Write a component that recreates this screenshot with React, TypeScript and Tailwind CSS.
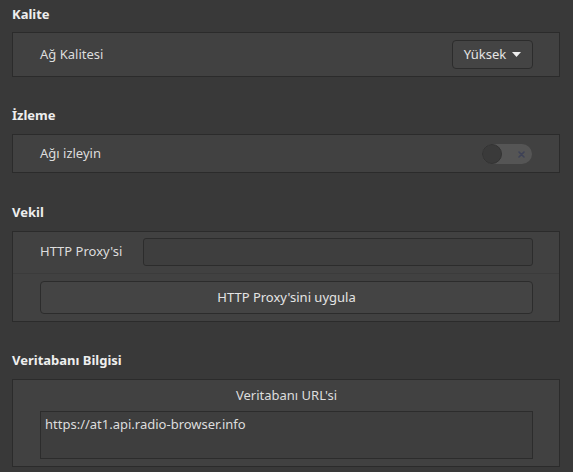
import React from 'react'

const font = { fontFamily: '"Noto Sans", "DejaVu Sans", sans-serif' }

const Heading: React.FC<{ text: string; top: string; bottom: string }> = ({ text, top, bottom }) => (
  <div className={`h-[20px] flex items-center text-[13px] font-bold text-[#eeeeee] ${top} ${bottom}`}>{text}</div>
)

const Toggle: React.FC = () => (
  <div className="relative w-[50px] h-[20px] rounded-full bg-[#555555]">
    <div className="absolute left-0 top-0 w-[20px] h-[20px] rounded-full bg-[#3a3a3a] border border-[#333333]" />
    <svg className="absolute left-[36px] top-[7px]" width="7" height="7" viewBox="0 0 7 7">
      <path d="M1 1L6 6M6 1L1 6" stroke="#3e4256" strokeWidth="1.6" strokeLinecap="round" />
    </svg>
  </div>
)

const App: React.FC = () => {
  const [monitor, setMonitor] = React.useState(false)

  return (
    <div className="w-[573px] h-[472px] overflow-hidden bg-[#393939] px-[12px] text-[13px] text-[#dddddd]" style={font}>
      <Heading text="Kalite" top="mt-[5px]" bottom="mb-[7px]" />
      <div className="w-[548px] border border-[#2b2b2b] bg-[#414141] flex items-center justify-between pl-[27px] pr-[26px] py-[7px]">
        <span>Ağ Kalitesi</span>
        <button className="h-[29px] w-[81px] rounded-[4px] border border-[#2c2c2c] bg-[#444444] flex items-center justify-center gap-[6px] text-[#e4e4e4]">
          <span>Yüksek</span>
          <svg width="9" height="5" viewBox="0 0 9 5">
            <path d="M0 0H9L4.5 5Z" fill="#eeeeee" />
          </svg>
        </button>
      </div>

      <Heading text="İzleme" top="mt-[29px]" bottom="mb-[8px]" />
      <div className="w-[548px] h-[39px] border border-[#2b2b2b] bg-[#414141] flex items-center justify-between pl-[27px] pr-[27px]">
        <span>Ağı izleyin</span>
        <div onClick={() => setMonitor(!monitor)}>
          <Toggle />
        </div>
      </div>

      <Heading text="Vekil" top="mt-[30px]" bottom="mb-[8px]" />
      <div className="w-[548px] border border-[#2b2b2b] bg-[#414141]">
        <div className="flex items-center pl-[27px] pr-[26px] pt-[6px] pb-[7px] border-b border-[#3b3b3b]">
          <span className="w-[103px]">HTTP Proxy'si</span>
          <input className="flex-1 h-[28px] rounded-[3px] border border-[#2c2c2c] bg-[#3e3e3e] outline-none px-2" />
        </div>
        <div className="pl-[27px] pr-[26px] pt-[7px] pb-[7px]">
          <button className="w-full h-[33px] rounded-[4px] border border-[#2c2c2c] bg-[#444444] text-[#e4e4e4]">
            HTTP Proxy'sini uygula
          </button>
        </div>
      </div>

      <Heading text="Veritabanı Bilgisi" top="mt-[29px]" bottom="mb-[8px]" />
      <div className="w-[548px] h-[88px] border border-[#2b2b2b] bg-[#414141] pl-[27px] pr-[26px]">
        <div className="h-[31px] flex items-center justify-center">Veritabanı URL'si</div>
        <div className="h-[48px] border border-[#2c2c2c] bg-[#3e3e3e] px-[4px] pt-[3px]">https://at1.api.radio-browser.info</div>
      </div>
    </div>
  )
}

export default App
